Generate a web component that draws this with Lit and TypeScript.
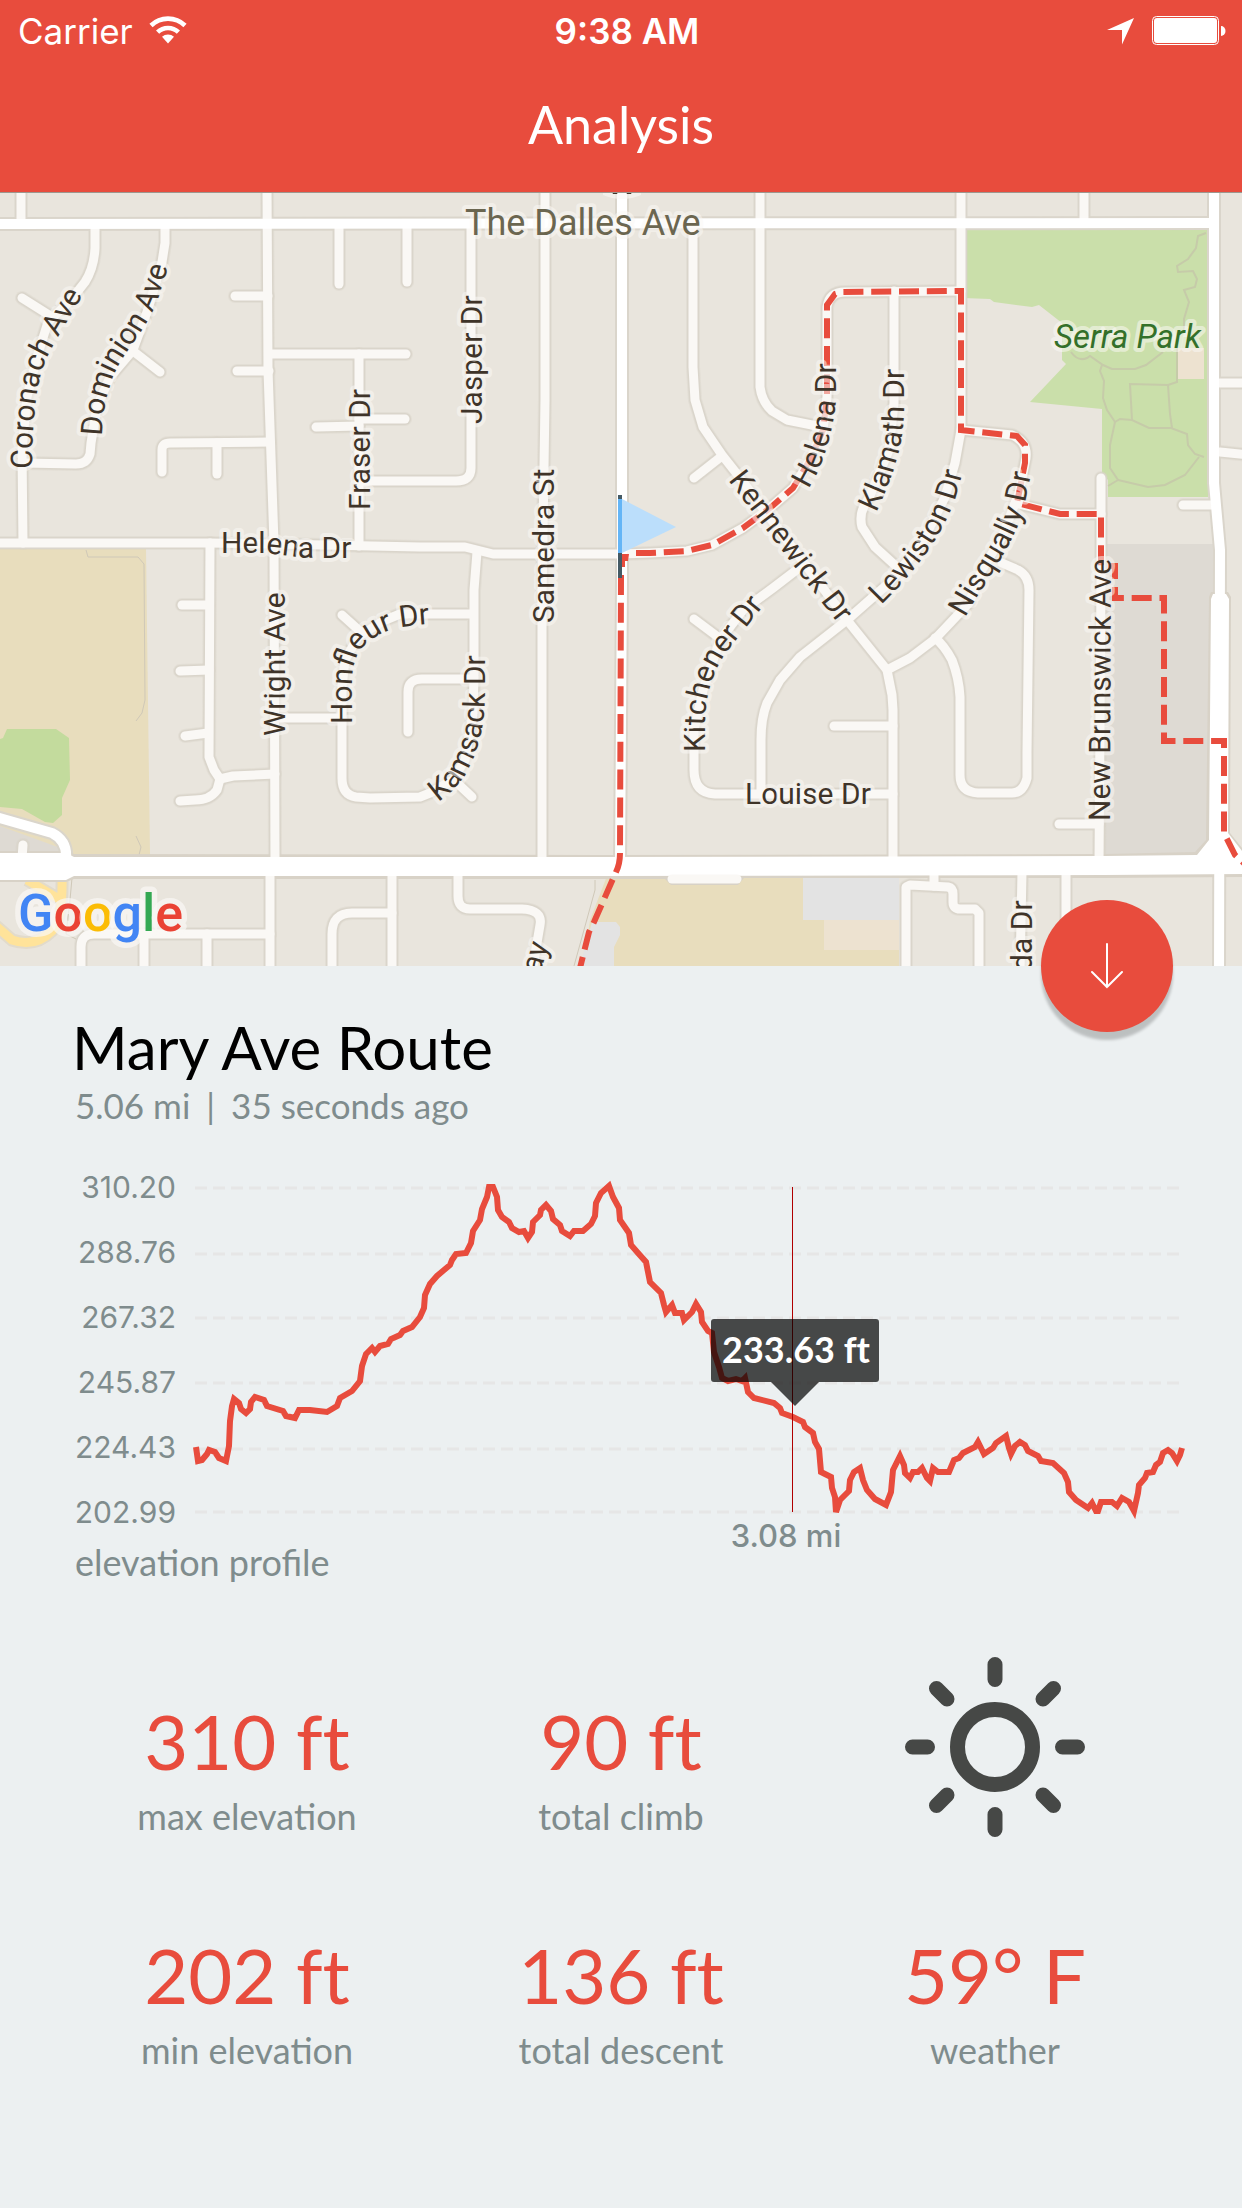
import { LitElement, html, svg, css } from "lit";
import { customElement, property } from "lit/decorators.js";

const PARK_PATHS = [
  "M1206 233 L1198 236 L1196 248 L1188 259 L1177 266 L1178 272 L1193 271 L1197 279 L1195 287 L1184 290 L1189 302 L1184 319 V330",
  "M1071 352 Q1078 362 1087 358 L1090 356 L1103 365 L1112 369 L1135 369 L1146 365 L1163 352",
  "M1102 365 L1100 371 L1104 381 L1103 398 L1107 410 L1115 422 L1120 419 L1132 420 L1149 428 L1171 428 L1187 434 L1188 445 L1195 454 L1204 457",
  "M1115 422 L1110 445 V468 L1118 480 L1108 486",
  "M1118 480 L1148 487 L1165 485 L1185 475 L1199 457",
  "M1132 420 L1130 384 L1168 385 L1170 414 L1172 428",
  "M1168 385 L1177 382 V340",
];

const MINOR_ROADS = [
  "M21 186 V224",
  "M95 226 V248 Q94 268 85 282 L70 301 L48 322 L37 357 L27 397 L22 450 L23 543",
  "M22 298 L49 315",
  "M165 226 V243 L162 262 L147 312 L133 350 L110 377 L97 407 L91 443 L90 454 Q87 464 76 464 L24 463",
  "M133 351 L160 372",
  "M267 186 L268 370 L274 543 L275 865",
  "M235 296 H268", "M237 371 H269",
  "M162 472 L162 450 Q162 443 170 443 L270 442", "M217 474 V443",
  "M339 284 V226", "M407 282 V226",
  "M272 354 H406", "M359 354 V546", "M316 427 L359 426", "M359 419 H405",
  "M359 481 H456 Q471 481 471 468 V226",
  "M-4 543 L210 543 L275 544 L420 547 H465 L493 554 H622",
  "M210 543 L209 757 L214 770 L220 779 L217 790 Q210 800 195 800 L180 801",
  "M220 779 L233 776 L275 774",
  "M182 605 H209", "M180 671 L209 670", "M185 736 L208 733",
  "M477 552 L474 590 V677 L473 713 L465 760 L453 780 L430 793 L420 797 L370 798 L356 797 Q342 795 342 778 V687 L345 660 L358 637 L383 621 L400 614 H474",
  "M342 615 L362 633", "M275 718 H342",
  "M473 679 H422 Q408 679 408 692 V732",
  "M472 797 L455 781",
  "M545 186 L545 400 L542 600 L542 865",
  "M693 226 V367 L695 400 L703 427 L722 455 L737 474 L847 620 L887 670 L892 695 L893 710 V865",
  "M694 478 L722 456",
  "M760 186 V387 Q762 402 772 411 L787 420 L822 427",
  "M961 186 V430 L955 463 L945 497 L922 543 L889 583 L847 620 L800 657 L780 680 L767 703 Q761 718 761 740 V793",
  "M622 554 L650 553 L687 551 L712 545 L743 528 L770 508 L793 488 L810 460 L823 430 L827 397 V307 Q829 292 845 292 L961 291",
  "M894 291 V403 L889 450 L869 498 Q858 512 862 527 L875 547 L897 567",
  "M961 430 L1012 435 Q1028 442 1026 458 L1019 493 L1002 537 L982 570 L969 603 L935 639 L910 658 L887 670",
  "M1015 503 L1060 514 H1101",
  "M1101 478 V580 L1099 865", "M1059 824 H1099",
  "M1002 563 L1018 570 Q1029 576 1029 590 L1027 753 V778 Q1023 793 1012 793 H978 Q960 792 960 775 V697 Q959 678 952 660 Q944 645 935 638",
  "M834 726 H893",
  "M893 794 H715 Q694 793 694 770 V730 L703 690 L720 640 L743 610 L773 588 L803 565",
  "M694 619 L722 640",
  "M1220 383 H1250", "M1220 452 L1250 455", "M1183 505 H1212",
  "M1084 186 V223",
  "M270 872 V972", "M392 872 V972",
  "M332 972 V934 Q332 913 352 913 H392",
  "M81 972 V947 Q81 934 94 934 H270", "M144 934 V972", "M207 934 V972",
  "M458 872 V896 Q458 909 470 909 H522 Q543 910 540 925 L532 972",
  "M906 972 V887 L910 885 L948 887 Q953 888 953 894 V902 Q953 909 960 909 H975 L979 913 V972",
  "M934 872 V886", "M1022 872 L1020 972", "M1066 872 V972",
  "M22 858 L23 845",
];

const MAIN_ROADS = [
  "M-4 224 L1214 223",
  "M622 186 V580 L620 866",
  "M1214 186 V483 L1220 550 L1219 972",
  "M-4 817 L52 833 Q68 841 66 860",
];

const ROUTE_LOOP =
  "M636 553 L650 553 L687 551 L712 545 L743 528 L770 508 L793 488 L810 460 L823 430 L827 397 V305 L835 294 L842 292 L961 291 L961 430 L1017 436 L1025 445 L1025 463 L1017 503 L1060 514 H1101 V566 H1115 V598 H1164 V741 H1224 V833 L1235 855 L1246 865";
const ROUTE_SOUTH = "M621 575 L620 853 Q620 864 616 872 L594 922 L589 932 L579 972";

interface StreetLabel {
  id: string;
  text: string;
  path: string;
}

const STREETS: StreetLabel[] = [
  { id: "coronach", text: "Coronach Ave", path: "M32 469 C32 440 34 410 38 387 S50 352 58 337 L90 283" },
  { id: "dominion", text: "Dominion Ave", path: "M102 436 C103 410 107 395 112 380 S128 350 140 333 S164 290 174 240" },
  { id: "helena-w", text: "Helena Dr", path: "M221 553 L262 553 Q285 555 305 558 L400 558" },
  { id: "fraser", text: "Fraser Dr", path: "M370 510 V360" },
  { id: "jasper", text: "Jasper Dr", path: "M482 424 V270" },
  { id: "samedra", text: "Samedra St", path: "M554 623 V440" },
  { id: "wright", text: "Wright Ave", path: "M285 736 V560" },
  { id: "honfleur", text: "Honfleur Dr", path: "M352 724 V684 C352 658 360 647 374 638 S400 625 450 623" },
  { id: "kamsack", text: "Kamsack Dr", path: "M438 802 C458 788 466 776 474 756 S485 716 485 690 V600" },
  { id: "kitchener", text: "Kitchener Dr", path: "M705 752 V722 C706 690 715 668 728 650 L778 588" },
  { id: "kennewick", text: "Kennewick Dr", path: "M728 480 L852 642" },
  { id: "helena-e", text: "Helena Dr", path: "M808 489 C822 468 833 435 836 400 V330" },
  { id: "klamath", text: "Klamath Dr", path: "M876 513 C892 478 903 450 904 410 V330" },
  { id: "lewiston", text: "Lewiston Dr", path: "M881 605 C912 575 945 535 958 490 L972 435" },
  { id: "nisqually", text: "Nisqually Dr", path: "M965 618 C985 580 1012 550 1024 508 L1038 440" },
  { id: "brunswick", text: "New Brunswick Ave", path: "M1110 821 L1111 520" },
  { id: "louise", text: "Louise Dr", path: "M745 804 H900" },
  { id: "south-1", text: "ay", path: "M540 974 L556 920" },
  { id: "south-2", text: "da Dr", path: "M1032 971 V880" },
];

@customElement("route-map")
class RouteMap extends LitElement {
  static styles = css`
    :host { display: block; }
    .map { display: block; width: 100%; height: auto; background: #e9e5dd; }
    .casing, .road { fill: none; stroke-linecap: round; stroke-linejoin: round; }
    .casing.minor { stroke: #dad5cb; stroke-width: 12; }
    .road.minor { stroke: #faf8f5; stroke-width: 9; }
    .casing.main { stroke: #dad5cb; stroke-width: 14; }
    .road.main { stroke: #ffffff; stroke-width: 10; }
    .glow { fill: none; stroke: #d8d2c7; stroke-opacity: 0.35; stroke-linecap: round; stroke-linejoin: round; stroke-width: 14; }
    .trail { fill: none; stroke: #c6cba9; stroke-width: 2; }
    .boundary { fill: none; stroke: #cfc8b8; stroke-width: 1; }
    .ramp { fill: none; stroke: #ffe39a; stroke-width: 9; }
    .ramp-casing { fill: none; stroke: #e2dbcb; stroke-width: 13; }
    .school { fill: #e8ddbd; }
    .green { fill: #c3db9d; }
    .park { fill: #cadfaa; }
    .lot { fill: #dedad3; }
    .building { fill: #e3e3e3; }
    .court { fill: #ede2d0; }
    .boulevard-edge { fill: #d8d2c7; }
    .boulevard { fill: #ffffff; }
    .route { fill: none; stroke: #e84c3d; stroke-width: 6; stroke-dasharray: 20 7.8; }
    .label { font-family: Roboto, "Liberation Sans", sans-serif; font-size: 30px; fill: #3f3429; stroke: #faf8f5; stroke-opacity: 0.55; stroke-width: 8; stroke-linejoin: round; paint-order: stroke; }
    .label.avenue { font-size: 36px; fill: #6b6650; }
    .label.place { font-size: 33px; fill: #34702a; font-style: italic; }
    .brand { font-family: Roboto, "Liberation Sans", sans-serif; font-size: 52px; font-weight: 500; stroke: #faf8f5; stroke-opacity: 0.7; stroke-width: 11; stroke-linejoin: round; paint-order: stroke; }
    .blue { fill: #4285f4; }
    .red { fill: #ea4335; }
    .yellow { fill: #fbbc05; }
    .leaf { fill: #34a853; }
  `;

  render() {
    return html`
      <svg class="map" viewBox="0 192 1242 774" role="img" aria-label="Route map">
        <path class="school" d="M0 549 H146 L150 855 H0 Z" />
        <path class="boundary" d="M86 550 L88 557 H138 L144 564 L145 700 L142 713 L136 721 M136 836 L141 847 L139 855" />
        <path class="green" d="M0 739 L3 738 L7 729 H56 L69 738 L70 780 L62 798 V815 L53 823 L45 822 L22 809 L0 807 Z" />
        <path class="lot" d="M0 826 L66 850 V860 H0 Z" />
        <path class="school" d="M607 876 H899 V966 H583 L590 920 Z" />
        <path class="building" d="M803 876 H899 V920 H803 Z M592 922 H616 L620 927 V935 L614 947 V966 H580 Z" />
        <path class="court" d="M824 920 H899 V950 H824 Z" />
        <path class="boundary" d="M595 880 V890 L574 966" />
        <path class="lot" d="M1102 544 H1214 V827 L1197 855 H1102 Z" />
        <path class="park" d="M963 228 H1208 V497 H1108 V480 L1102 473 V409 L1030 402 L1066 364 L1062 360 V323 L1039 305 L1032 307 L994 302 L990 299 L963 298 Z" />
        <path class="court" d="M1178 348 H1204 V379 H1178 Z" />
        ${PARK_PATHS.map((d) => svg`<path class="trail" d=${d} />`)}
        <path class="ramp-casing" d="M-4 926 L12 940 Q35 948 52 931 Q63 920 62 876 M27 880 L59 899" />
        <path class="ramp" d="M-4 926 L12 940 Q35 948 52 931 Q63 920 62 876 M27 880 L59 899" />
        <path class="boundary" d="M72 878 L70 900 L66 934 L76 939" />

        ${MINOR_ROADS.map((d) => svg`<path class="glow" d=${d} />`)}
        ${MINOR_ROADS.map((d) => svg`<path class="casing minor" d=${d} />`)}
        ${MAIN_ROADS.map((d) => svg`<path class="casing main" d=${d} />`)}
        <path class="boulevard-edge" d="M0 851 H66 L74 854 L600 855 L1104 854 L1195 852 L1206 840 L1209 597 L1211 592 H1228 L1231 597 L1230 833 L1242 848 V877 L1104 878 H744 L738 885 H671 L665 879 H74 L66 882 H0 Z" />
        ${MINOR_ROADS.map((d) => svg`<path class="road minor" d=${d} />`)}
        ${MAIN_ROADS.map((d) => svg`<path class="road main" d=${d} />`)}
        <path class="boulevard" d="M0 853 H66 L74 857 H600 L1104 856 L1197 855 L1209 840 L1211 599 L1213 594 H1226 L1229 599 L1228 833 L1242 851 V874 L1104 875 L600 876 H74 L66 880 H0 Z" />
        <path class="road minor" d="M672 879 H737" />

        <path class="route" d=${ROUTE_LOOP} />
        <path class="route" d=${ROUTE_SOUTH} />
        <path d="M622 554 H629 L628 561 H625 V567 H619 V554 Z" fill="#e84c3d" />

        <path d="M603 192 h38 v3 q-19 8 -38 0 Z" fill="#faf8f5" fill-opacity="0.6" />
        <path d="M612 192 h6 l-1 2 h-4 Z M626 192 h6 l-1 2 h-4 Z" fill="#3f3429" />
        ${STREETS.map(
          (s) => svg`
            <path id=${s.id} d=${s.path} fill="none" />
            <text class="label"><textPath href=${"#" + s.id}>${s.text}</textPath></text>`
        )}
        <text class="label avenue" x="465" y="235">The Dalles Ave</text>
        <text class="label place" x="1054" y="348">Serra Park</text>

        <path d="M618 495 h4 v83 h-4 Z" fill="#455a64" />
        <path d="M618 499 h4 v54 h-4 Z" fill="#64b5f6" />
        <path d="M622 499 L676 527 L622 553 Z" fill="#bbdefb" />

        <text class="brand" x="18" y="931"><tspan class="blue">G</tspan><tspan class="red">o</tspan><tspan class="yellow">o</tspan><tspan class="blue">g</tspan><tspan class="leaf">l</tspan><tspan class="red">e</tspan></text>
        <path d="M0 192.5 H1242" stroke="#9d978f" />
      </svg>
    `;
  }
}

const PROFILE: Array<[number, number]> = [
  [196, 1447], [198, 1461], [202, 1460], [207, 1454], [209, 1450], [215, 1452], [219, 1458], [226, 1461],
  [229, 1446], [230, 1421], [232, 1406], [234, 1399], [239, 1403], [241, 1409], [246, 1413], [250, 1409], [251, 1402],
  [255, 1397], [264, 1400], [267, 1406], [283, 1411], [286, 1416], [295, 1418], [299, 1410], [310, 1410],
  [327, 1412], [337, 1406], [340, 1398], [352, 1391], [360, 1381], [362, 1366], [366, 1354], [372, 1348],
  [375, 1352], [380, 1346], [388, 1344], [391, 1339], [400, 1335], [403, 1331], [412, 1327], [420, 1317], [424, 1308],
  [425, 1295], [430, 1284], [437, 1276], [444, 1270], [450, 1265], [452, 1260], [456, 1254], [466, 1253],
  [471, 1243], [473, 1231], [480, 1220], [482, 1209], [487, 1197], [489, 1187], [493, 1187], [497, 1197],
  [498, 1210], [502, 1217], [509, 1222], [512, 1228], [519, 1232], [524, 1231], [528, 1238], [532, 1232], [533, 1222],
  [540, 1215], [541, 1210], [546, 1205], [551, 1211], [553, 1219], [560, 1225], [562, 1231], [570, 1236],
  [574, 1231], [583, 1231], [591, 1224], [595, 1216], [596, 1203], [601, 1193], [609, 1186], [613, 1197],
  [619, 1208], [620, 1220], [629, 1233], [631, 1245], [638, 1253], [646, 1262], [648, 1272], [650, 1282],
  [661, 1293], [664, 1305], [666, 1312], [672, 1305], [675, 1313], [682, 1313], [684, 1320], [692, 1312],
  [696, 1304], [701, 1312], [702, 1322], [708, 1331], [712, 1333], [714, 1352], [719, 1367], [722, 1378],
  [728, 1381], [736, 1379], [742, 1381], [745, 1378], [748, 1392], [754, 1398], [774, 1403], [780, 1408],
  [782, 1413], [793, 1417], [803, 1422], [805, 1427], [813, 1433], [815, 1442], [819, 1449], [821, 1472],
  [831, 1477], [832, 1488], [835, 1497], [836, 1512], [840, 1500], [849, 1491], [850, 1480], [854, 1472],
  [860, 1468], [863, 1480], [867, 1490], [875, 1499], [886, 1505], [891, 1492], [893, 1470], [900, 1456],
  [904, 1465], [905, 1473], [910, 1478], [913, 1472], [918, 1472], [922, 1468], [927, 1478], [930, 1481],
  [933, 1468], [938, 1472], [949, 1472], [954, 1460], [959, 1458], [963, 1453], [975, 1447], [978, 1442],
  [982, 1450], [984, 1454], [993, 1448], [996, 1443], [1006, 1436], [1009, 1448], [1011, 1454], [1015, 1446],
  [1020, 1442], [1025, 1445], [1028, 1451], [1038, 1456], [1041, 1461], [1053, 1463], [1064, 1473], [1068, 1482],
  [1069, 1492], [1076, 1500], [1088, 1508], [1092, 1503], [1096, 1511], [1098, 1511], [1101, 1502], [1112, 1502],
  [1117, 1506], [1122, 1498], [1129, 1502], [1134, 1511], [1138, 1493], [1139, 1485], [1145, 1478], [1147, 1473],
  [1153, 1472], [1156, 1465], [1160, 1462], [1163, 1453], [1168, 1450], [1172, 1453], [1177, 1461], [1180, 1455],
  [1182, 1448],
];

const GRID_LINES = [1188, 1254, 1318, 1383, 1449, 1512];
const TICKS = ["310.20", "288.76", "267.32", "245.87", "224.43", "202.99"];

@customElement("elevation-chart")
class ElevationChart extends LitElement {
  static styles = css`
    :host { display: block; }
    .chart { display: grid; grid-template-columns: 104px 1fr; column-gap: 16px; }
    .ticks { margin: 0; padding: 0; list-style: none; text-align: right; font-family: Inter, "Liberation Sans", sans-serif; font-size: 30px; line-height: 65px; color: #7f8c8d; }
    .plot { display: block; width: 100%; height: auto; overflow: visible; }
    .grid { stroke: #e6e6e6; stroke-width: 3; stroke-dasharray: 12 6; }
    .line { fill: none; stroke: #e84c3d; stroke-width: 6; stroke-linejoin: miter; }
    .cursor { stroke: #b00000; stroke-width: 1; }
    .bubble { fill: #000000; fill-opacity: 0.7; }
    .reading { font-family: Lato, "Liberation Sans", sans-serif; font-size: 36px; font-weight: 700; font-variant-ligatures: none; fill: #ffffff; text-anchor: middle; }
    .distance { font-family: Inter, "Liberation Sans", sans-serif; font-size: 31px; font-weight: 500; fill: #7f8c8d; text-anchor: middle; }
  `;

  render() {
    return html`
      <div class="chart">
        <ul class="ticks">
          ${TICKS.map((t) => html`<li>${t}</li>`)}
        </ul>
        <svg class="plot" viewBox="192 1155 992 390" role="img" aria-label="Elevation along the route">
          ${GRID_LINES.map((y) => svg`<path class="grid" d=${`M195 ${y} H1179`} />`)}
          <polyline class="line" points=${PROFILE.map((p) => p.join(",")).join(" ")} />
          <path class="cursor" d="M792.5 1187 V1512" />
          <path class="bubble" d="M714 1319 H876 Q879 1319 879 1322 V1379 Q879 1382 876 1382 H819 L795 1406 L771 1382 H714 Q711 1382 711 1379 V1322 Q711 1319 714 1319 Z" />
          <text class="reading" x="796" y="1363">233.63 ft</text>
          <text class="distance" x="786" y="1547">3.08 mi</text>
        </svg>
      </div>
    `;
  }
}

@customElement("stat-cell")
class StatCell extends LitElement {
  @property() value = "";
  @property() label = "";

  static styles = css`
    :host { display: flex; flex-direction: column; align-items: center; gap: 10px; font-family: Lato, "Liberation Sans", sans-serif; }
    .value { font-size: 76px; line-height: 82px; color: #e84c3d; white-space: nowrap; font-variant-ligatures: none; }
    .label { font-size: 36px; line-height: 48px; color: #7f8c8d; white-space: nowrap; }
  `;

  render() {
    return html`<span class="value">${this.value}</span><span class="label">${this.label}</span>`;
  }
}

@customElement("app-root")
class AppRoot extends LitElement {
  static styles = css`
    :host { display: block; min-height: 100vh; background: #ecf0f1; font-family: Lato, "Liberation Sans", sans-serif; }
    .header { background: #e84c3d; color: #ffffff; padding-bottom: 6px; }
    .status { display: grid; grid-template-columns: 1fr auto 1fr; align-items: center; padding: 0 6px 0 18px; font-family: Inter, "Liberation Sans", sans-serif; font-size: 35px; line-height: 62px; }
    .carrier { display: flex; align-items: center; gap: 16px; }
    .clock { font-weight: 600; }
    .indicators { display: flex; align-items: center; justify-content: flex-end; gap: 17px; padding-right: 10px; }
    .icon { display: block; }
    .title { margin: 0; text-align: center; font-size: 52px; font-weight: 400; line-height: 124px; }
    .map-area { position: relative; }
    .fab { position: absolute; right: 69px; bottom: -66px; display: flex; align-items: center; justify-content: center; width: 132px; height: 132px; padding: 0; border: 0; border-radius: 50%; background: #e84c3d; box-shadow: 0 8px 3px rgba(0, 0, 0, 0.2); cursor: pointer; }
    .details { padding: 48px 58px 0 72px; }
    .name { margin: 0; font-size: 60px; font-weight: 400; line-height: 66px; color: #000000; }
    .meta, .caption { margin: 0; padding-left: 3px; color: #7f8c8d; }
    .meta { display: flex; gap: 16px; margin-bottom: 25px; font-size: 35px; line-height: 50px; }
    .caption { font-size: 36px; line-height: 34px; }
    .stats { display: grid; grid-template-columns: repeat(3, 1fr); align-items: end; row-gap: 94px; padding: 77px 60px 0; }
    .sun { display: block; justify-self: center; }
  `;

  render() {
    return html`
      <header class="header">
        <div class="status">
          <span class="carrier">
            Carrier
            <svg class="icon" width="38" height="30" viewBox="0 0 38 30" aria-hidden="true">
              <g fill="none" stroke="#ffffff" stroke-width="4.6">
                <path d="M2 9.5 A24.5 24.5 0 0 1 36 9.5" />
                <path d="M8.6 16.2 A15 15 0 0 1 29.4 16.2" />
              </g>
              <path d="M13 20.800 A9 9 0 0 1 25 20.800 L19 27.500 Z" fill="#ffffff" />
            </svg>
          </span>
          <span class="clock">9:38 AM</span>
          <span class="indicators">
            <svg class="icon" width="28" height="28" viewBox="0 0 28 28" aria-hidden="true">
              <path d="M27 1 L0 13 H15 V27.500 Z" fill="#ffffff" />
            </svg>
            <svg class="icon" width="74" height="30" viewBox="0 0 74 30" aria-hidden="true">
              <rect x="0.500" y="0.500" width="66" height="28" rx="4" fill="none" stroke="#ffffff" />
              <rect x="2" y="2" width="63" height="25" rx="3" fill="#ffffff" />
              <path d="M69 10 A4.500 5 0 0 1 69 20 Z" fill="#ffffff" />
            </svg>
          </span>
        </div>
        <h1 class="title">Analysis</h1>
      </header>
      <main>
        <div class="map-area">
          <route-map></route-map>
          <button class="fab" type="button" aria-label="Download route">
            <svg class="icon" width="36" height="48" viewBox="0 0 36 48" aria-hidden="true">
              <path d="M18 2 V45 M3 30 L18 45 L33 30" fill="none" stroke="#ffffff" stroke-width="2" stroke-linecap="round" />
            </svg>
          </button>
        </div>
        <section class="details">
          <h2 class="name">Mary Ave Route</h2>
          <p class="meta"><span>5.06 mi</span><span>|</span><span>35 seconds ago</span></p>
          <elevation-chart></elevation-chart>
          <p class="caption">elevation profile</p>
        </section>
        <section class="stats">
          <stat-cell value="310 ft" label="max elevation"></stat-cell>
          <stat-cell value="90 ft" label="total climb"></stat-cell>
          <svg class="sun" width="182" height="184" viewBox="-91 -91 182 184" role="img" aria-label="Sunny">
            <g fill="none" stroke="#464846" stroke-width="15" stroke-linecap="round">
              <circle r="37.500" />
              <path d="M0 -82.500 V-67.500 M0 82.500 V67.500 M-82.500 0 H-67.500 M82.500 0 H67.500 M-58.500 -58.500 L-48 -48 M58.500 -58.500 L48 -48 M-58.500 58.500 L-48 48 M58.500 58.500 L48 48" />
            </g>
          </svg>
          <stat-cell value="202 ft" label="min elevation"></stat-cell>
          <stat-cell value="136 ft" label="total descent"></stat-cell>
          <stat-cell value="59° F" label="weather"></stat-cell>
        </section>
      </main>
    `;
  }
}
